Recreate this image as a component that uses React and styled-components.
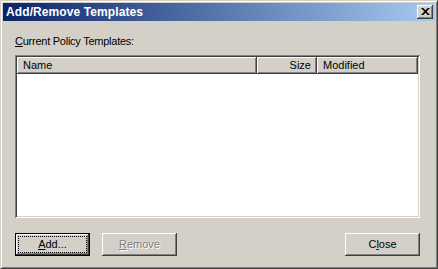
import React from 'react';
import styled, { createGlobalStyle } from 'styled-components';

const GlobalStyle = createGlobalStyle`
    html, body {
        margin: 0;
        padding: 0;
        background: #d4d0c8;
    }
    * {
        box-sizing: border-box;
    }
`;

const columns = [
    { id: 'name', title: 'Name', width: 240, align: 'left' },
    { id: 'size', title: 'Size', width: 60, align: 'right' },
    { id: 'modified', title: 'Modified', width: 101, align: 'left' },
];

function App() {
    return (
        <>
            <GlobalStyle />
            <WindowStyled>
                <TitleBar>
                    <span>Add/Remove Templates</span>
                    <CloseBox aria-label="Close">
                        <svg width="9" height="7" viewBox="0 0 9 7">
                            <path d="M0 0h2.2l2.3 2.2L6.8 0H9L5.6 3.5 9 7H6.8L4.5 4.8 2.2 7H0l3.4-3.5z" fill="#000" />
                        </svg>
                    </CloseBox>
                </TitleBar>
                <Body>
                    <Label>
                        <u>C</u>urrent Policy Templates:
                    </Label>
                    <ListView>
                        <HeaderRow>
                            {columns.map((col) => (
                                <HeaderCell key={col.id} $width={col.width} $align={col.align}>
                                    {col.title}
                                </HeaderCell>
                            ))}
                        </HeaderRow>
                    </ListView>
                    <ButtonRow>
                        <Button $default>
                            <span className="focus">
                                <u>A</u>dd...
                            </span>
                        </Button>
                        <Button disabled>
                            <span>
                                <u>R</u>emove
                            </span>
                        </Button>
                        <Spacer />
                        <Button>
                            <span>
                                C<u>l</u>ose
                            </span>
                        </Button>
                    </ButtonRow>
                </Body>
            </WindowStyled>
        </>
    );
}

const WindowStyled = styled.div`
    width: 438px;
    height: 269px;
    display: flex;
    flex-direction: column;
    padding: 2px;
    background: #d4d0c8;
    border-top: 1px solid #d4d0c8;
    border-left: 1px solid #d4d0c8;
    border-right: 1px solid #404040;
    border-bottom: 1px solid #404040;
    box-shadow: inset 1px 1px #ffffff, inset -1px -1px #808080;
    font-family: 'Liberation Sans', Arial, sans-serif;
    font-size: 11px;
    color: #000;
`;

const TitleBar = styled.div`
    height: 18px;
    flex: 0 0 18px;
    display: flex;
    align-items: center;
    justify-content: space-between;
    padding: 0 2px 0 3px;
    background: linear-gradient(to right, #0a246a, #a6caf0);
    color: #fff;
    font-weight: bold;
    font-size: 12px;
    letter-spacing: 0.1px;
`;

const CloseBox = styled.div`
    width: 16px;
    height: 14px;
    display: flex;
    align-items: center;
    justify-content: center;
    background: #d4d0c8;
    box-shadow: inset -1px -1px #404040, inset 1px 1px #ffffff,
        inset -2px -2px #808080, inset 2px 2px #d4d0c8;
    svg {
        display: block;
        margin-top: -1px;
    }
`;

const Body = styled.div`
    flex: 1;
    display: flex;
    flex-direction: column;
    padding: 14px 15px 10px 12px;
`;

const Label = styled.div`
    height: 13px;
    line-height: 13px;
    margin-bottom: 7px;
    letter-spacing: -0.25px;
`;

const ListView = styled.div`
    height: 163px;
    padding: 2px;
    background: #fff;
    box-shadow: inset 1px 1px #808080, inset -1px -1px #ffffff,
        inset 2px 2px #404040, inset -2px -2px #d4d0c8;
`;

const HeaderRow = styled.div`
    display: flex;
    height: 17px;
`;

const HeaderCell = styled.div`
    width: ${(p) => p.$width}px;
    flex: 0 0 ${(p) => p.$width}px;
    height: 17px;
    line-height: 17px;
    padding: 0 6px 0 6px;
    text-align: ${(p) => p.$align};
    background: #d4d0c8;
    box-shadow: inset -1px -1px #404040, inset 1px 1px #ffffff,
        inset -2px -2px #808080;
    white-space: nowrap;
    overflow: hidden;
`;

const ButtonRow = styled.div`
    display: flex;
    gap: 12px;
    margin-top: 15px;
`;

const Spacer = styled.div`
    flex: 1;
`;

const Button = styled.button`
    width: 75px;
    height: 23px;
    padding: 0;
    margin: 0;
    border: none;
    display: flex;
    align-items: center;
    justify-content: center;
    font-family: 'Liberation Sans', Arial, sans-serif;
    font-size: 11px;
    color: #000;
    background: #d4d0c8;
    box-shadow: ${(p) =>
        p.$default
            ? 'inset 0 0 0 1px #000, inset -2px -2px #404040, inset 2px 2px #ffffff, inset -3px -3px #808080'
            : 'inset -1px -1px #404040, inset 1px 1px #ffffff, inset -2px -2px #808080, inset 2px 2px #d4d0c8'};

    span {
        display: flex;
        align-items: center;
        justify-content: center;
        line-height: 13px;
    }

    .focus {
        width: 67px;
        height: 15px;
        outline: 1px dotted #000;
    }

    &:disabled {
        color: #808080;
        text-shadow: 1px 1px #ffffff;
    }
`;

export default App;
